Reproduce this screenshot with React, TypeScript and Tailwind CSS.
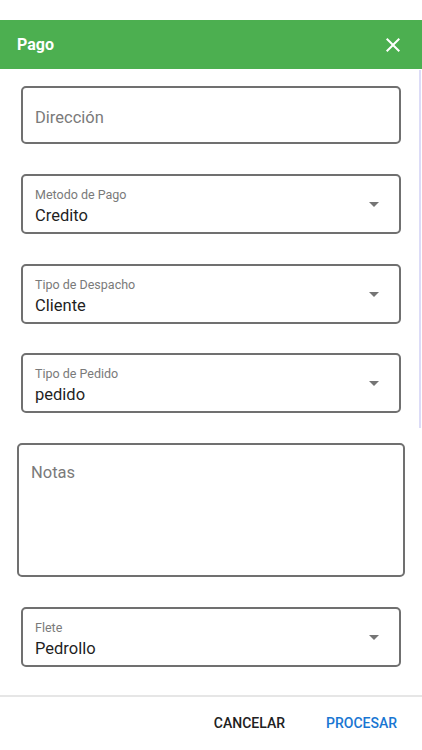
import React from "react";

function Arrow() {
  return (
    <svg width="24" height="24" viewBox="0 0 24 24" className="shrink-0">
      <path d="M7 10l5 5 5-5z" fill="#757575" />
    </svg>
  );
}

function SelectField({ label, value, className = "" }: { label: string; value: string; className?: string }) {
  return (
    <div
      className={`h-[60px] border-2 border-[#707070] rounded-[5px] flex items-center pl-[12px] pr-[13px] ${className}`}
    >
      <div className="flex-1 flex flex-col pt-[4px]">
        <span className="text-[12.5px] leading-[14px] text-[#7a7a7a]">{label}</span>
        <span className="mt-[4px] text-[16.5px] leading-[19px] text-[#1f1f1f]">{value}</span>
      </div>
      <Arrow />
    </div>
  );
}

export default function App() {
  return (
    <div
      className="w-[422px] h-[750px] bg-white overflow-hidden flex flex-col"
      style={{ fontFamily: "Roboto, 'Noto Sans', sans-serif" }}
    >
      <div className="h-[20px] shrink-0 bg-white" />
      <div className="h-[49px] shrink-0 bg-[#4caf50] flex items-center justify-between pl-[17px] pr-[17px]">
        <span className="text-white font-bold text-[16px]">Pago</span>
        <svg width="24" height="24" viewBox="0 0 24 24">
          <path
            d="M19 6.41L17.59 5 12 10.59 6.41 5 5 6.41 10.59 12 5 17.59 6.41 19 12 13.41 17.59 19 19 17.59 13.41 12z"
            fill="#ffffff"
          />
        </svg>
      </div>
      <div className="relative h-[626px] shrink-0 overflow-hidden">
        <div className="absolute right-[1px] top-[1px] w-[2px] h-[358px] bg-[#dcdcf7]" />
        <div className="flex flex-col pt-[17px]">
          <div className="mx-[21px] h-[58px] border-2 border-[#707070] rounded-[5px] pl-[12px] pt-[18px]">
            <span className="text-[16.5px] leading-[19px] text-[#7a7a7a]">Dirección</span>
          </div>
          <SelectField className="mx-[21px] mt-[30px]" label="Metodo de Pago" value="Credito" />
          <SelectField className="mx-[21px] mt-[30px]" label="Tipo de Despacho" value="Cliente" />
          <SelectField className="mx-[21px] mt-[29px]" label="Tipo de Pedido" value="pedido" />
          <div className="mx-[17px] mt-[30px] h-[134px] border-2 border-[#707070] rounded-[5px] pl-[12px] pt-[16px]">
            <span className="text-[16.5px] leading-[19px] text-[#7a7a7a]">Notas</span>
          </div>
          <SelectField className="mx-[21px] mt-[30px]" label="Flete" value="Pedrollo" />
        </div>
      </div>
      <div className="h-[2px] shrink-0 bg-[#e6e6e6]" />
      <div className="flex-1 flex items-center justify-end gap-[41px] pr-[25px]">
        <span className="text-[14px] font-medium text-[#212121]">CANCELAR</span>
        <span className="text-[14px] font-medium text-[#1976d2]">PROCESAR</span>
      </div>
    </div>
  );
}
